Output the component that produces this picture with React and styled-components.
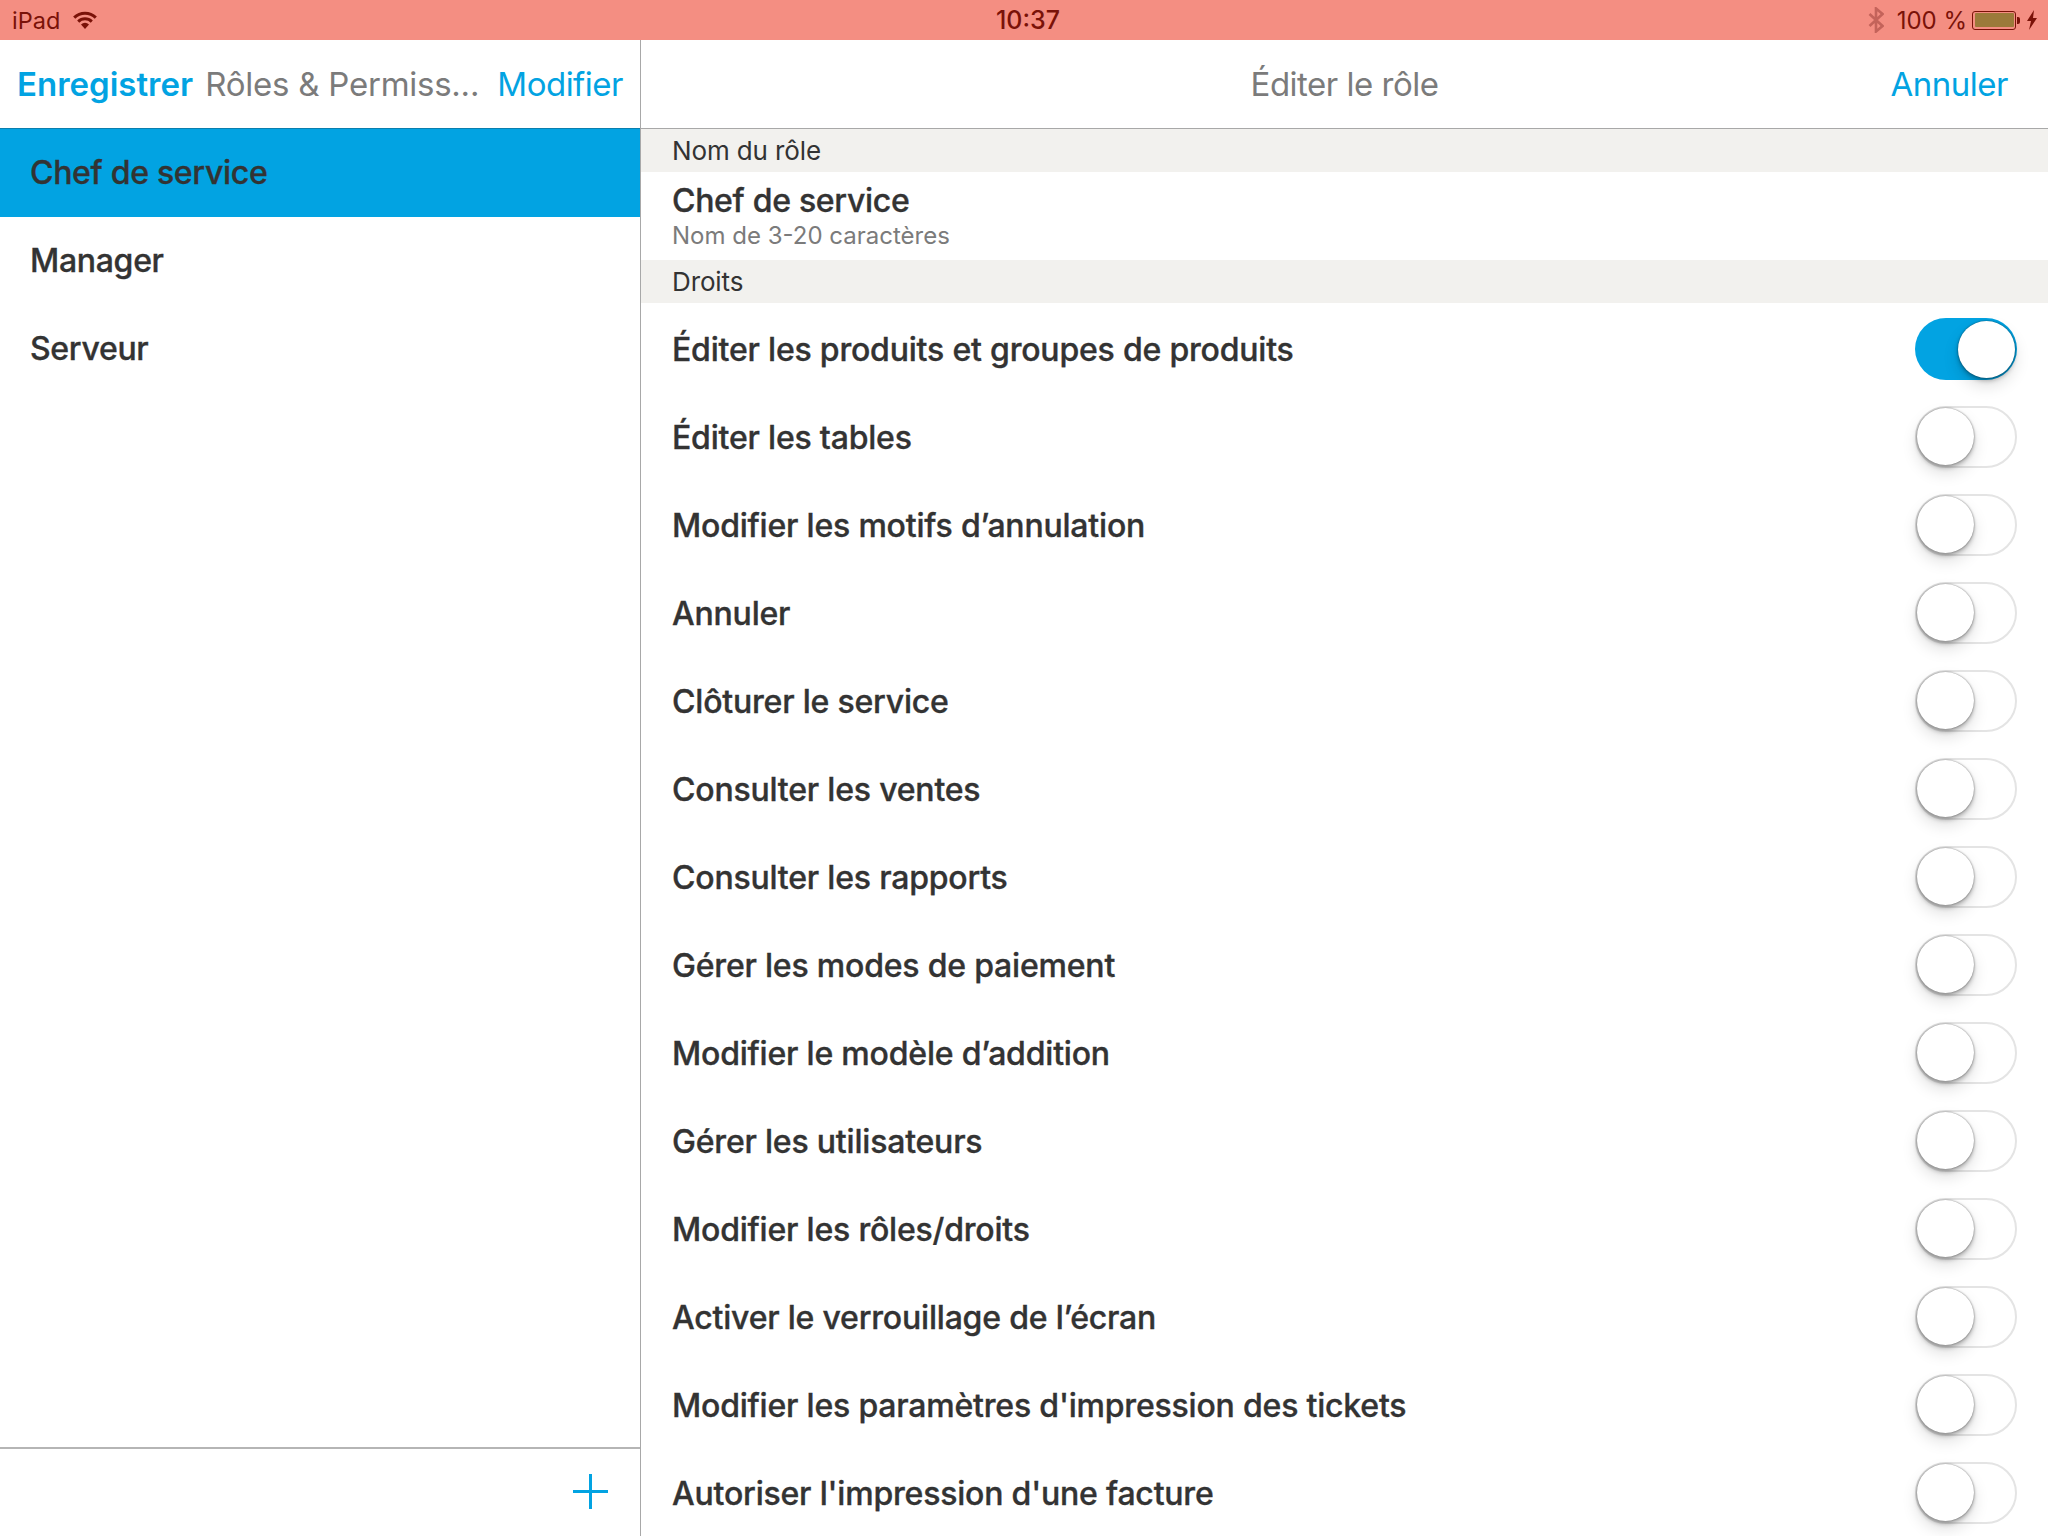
import React from 'react'
import styled, { createGlobalStyle } from 'styled-components'

const BLUE = '#02a3e2'
const INK = '#333333'
const GRAY = '#7b7b7b'
const STATUS_INK = '#7a1208'

const rights = [
  { label: 'Éditer les produits et groupes de produits', on: true },
  { label: 'Éditer les tables' },
  { label: 'Modifier les motifs d’annulation' },
  { label: 'Annuler' },
  { label: 'Clôturer le service' },
  { label: 'Consulter les ventes' },
  { label: 'Consulter les rapports' },
  { label: 'Gérer les modes de paiement' },
  { label: 'Modifier le modèle d’addition' },
  { label: 'Gérer les utilisateurs' },
  { label: 'Modifier les rôles/droits' },
  { label: 'Activer le verrouillage de l’écran' },
  { label: "Modifier les paramètres d'impression des tickets" },
  { label: "Autoriser l'impression d'une facture" },
]

const roles = ['Chef de service', 'Manager', 'Serveur']

function App() {
  return (
    <Screen>
      <GlobalStyle />
      <StatusBar>
        <StatusLeft>
          <span>iPad</span>
          <svg width="24" height="18" viewBox="0 0 24 18">
            <path d="M1.2 6.6a15.4 15.4 0 0 1 21.6 0" fill="none" stroke={STATUS_INK} strokeWidth="3" />
            <path d="M5.2 10.6a9.8 9.8 0 0 1 13.6 0" fill="none" stroke={STATUS_INK} strokeWidth="3" />
            <path d="M8 13.4a6 6 0 0 1 8 0L12 18z" fill={STATUS_INK} />
          </svg>
        </StatusLeft>
        <StatusTime>10:37</StatusTime>
        <StatusRight>
          <svg width="16" height="26" viewBox="0 0 16 26">
            <path d="M1.5 7l13 12-6.500 5.500V1.500L14.500 7l-13 12" fill="none" stroke="#c4635a" strokeWidth="2.6" />
          </svg>
          <BatteryText>100 %</BatteryText>
          <Battery><BatteryFill /></Battery>
          <BatteryTip />
          <svg width="12" height="20" viewBox="0 0 12 20">
            <path d="M8 0L1 11h4l-2 9 8-12H7z" fill={STATUS_INK} />
          </svg>
        </StatusRight>
      </StatusBar>
      <Columns>
        <Sidebar>
          <SideNav>
            <NavBold>Enregistrer</NavBold>
            <NavGrayTitle>Rôles &amp; Permiss...</NavGrayTitle>
            <NavLink>Modifier</NavLink>
          </SideNav>
          <RoleList>
            {roles.map((role, i) => (
              <RoleRow key={role} $selected={i === 0}>{role}</RoleRow>
            ))}
          </RoleList>
          <SideFooter>
            <svg width="35" height="35" viewBox="0 0 35 35">
              <path d="M17.500 0v35M0 17.500h35" stroke={BLUE} strokeWidth="3" />
            </svg>
          </SideFooter>
        </Sidebar>
        <Detail>
          <DetailNav>
            <DetailTitle>Éditer le rôle</DetailTitle>
            <CancelLink>Annuler</CancelLink>
          </DetailNav>
          <SectionHeader>Nom du rôle</SectionHeader>
          <NameBlock>
            <NameValue>Chef de service</NameValue>
            <NameHint>Nom de 3-20 caractères</NameHint>
          </NameBlock>
          <SectionHeader>Droits</SectionHeader>
          <RightsList>
            {rights.map((r) => (
              <RightRow key={r.label}>
                <span>{r.label}</span>
                <Toggle $on={r.on}><Knob $on={r.on} /></Toggle>
              </RightRow>
            ))}
          </RightsList>
        </Detail>
      </Columns>
    </Screen>
  )
}

export default App

const GlobalStyle = createGlobalStyle`
  html, body {
    margin: 0;
    padding: 0;
    background: #fff;
  }
  * {
    box-sizing: border-box;
  }
`

const Screen = styled.div`
  width: 2048px;
  height: 1536px;
  overflow: hidden;
  display: flex;
  flex-direction: column;
  font-family: Inter, "Liberation Sans", sans-serif;
  color: ${INK};
`

const StatusBar = styled.div`
  height: 40px;
  flex: none;
  background: #f48e82;
  display: grid;
  grid-template-columns: 1fr auto 1fr;
  align-items: center;
  padding: 0 10px 0 12px;
  color: ${STATUS_INK};
  font-size: 24px;
`

const StatusLeft = styled.div`
  display: flex;
  align-items: center;
  gap: 13px;
  font-size: 23.5px;
`

const StatusTime = styled.div`
  font-weight: 500;
  font-size: 25px;
  margin-left: 6px;
`

const StatusRight = styled.div`
  display: flex;
  align-items: center;
  justify-content: flex-end;
`

const BatteryText = styled.span`
  margin: 0 5px 0 13px;
`

const Battery = styled.div`
  width: 44px;
  height: 19px;
  border: 1px solid ${STATUS_INK};
  border-radius: 3px;
  padding: 1.500px;
`

const BatteryFill = styled.div`
  height: 100%;
  background: #9b7a3a;
  border-radius: 1px;
`

const BatteryTip = styled.div`
  width: 3px;
  height: 7px;
  margin: 0 6px 0 1px;
  background: ${STATUS_INK};
  border-radius: 0 2px 2px 0;
`

const Columns = styled.div`
  flex: 1;
  display: flex;
  min-height: 0;
`

const Sidebar = styled.div`
  width: 641px;
  flex: none;
  display: flex;
  flex-direction: column;
  border-right: 1px solid #a8a8a8;
`

const SideNav = styled.div`
  height: 89px;
  flex: none;
  display: flex;
  align-items: center;
  justify-content: space-between;
  padding: 0 17px;
  font-size: 33px;
  border-bottom: 1px solid #0a7fae;
`

const NavBold = styled.span`
  color: ${BLUE};
  font-weight: 600;
`

const NavGrayTitle = styled.span`
  color: ${GRAY};
  letter-spacing: -0.25px;
  margin-right: 6px;
`

const NavLink = styled.span`
  color: ${BLUE};
  letter-spacing: -0.5px;
`

const RoleList = styled.div`
  flex: 1;
`

const RoleRow = styled.div`
  height: 88px;
  display: flex;
  align-items: center;
  padding: 0 0 1px 30px;
  font-size: 32px;
  font-weight: 500;
  -webkit-text-stroke: 0.35px ${INK};
  letter-spacing: -0.3px;
  background: ${(p) => (p.$selected ? BLUE : 'transparent')};
`

const SideFooter = styled.div`
  height: 89px;
  flex: none;
  border-top: 2px solid #b5b5b5;
  display: flex;
  align-items: center;
  justify-content: flex-end;
  padding: 0 32px 3px 0;
`

const Detail = styled.div`
  flex: 1;
  min-width: 0;
  display: flex;
  flex-direction: column;
`

const DetailNav = styled.div`
  height: 89px;
  flex: none;
  display: flex;
  align-items: center;
  justify-content: center;
  position: relative;
  border-bottom: 1px solid #a8a8a8;
  font-size: 33px;
  letter-spacing: -0.5px;
`

const DetailTitle = styled.span`
  color: ${GRAY};
`

const CancelLink = styled.span`
  position: absolute;
  right: 40px;
  color: ${BLUE};
`

const SectionHeader = styled.div`
  height: 43px;
  flex: none;
  background: #f2f1ee;
  display: flex;
  align-items: center;
  padding: 0 0 1px 31px;
  font-size: 26px;
  letter-spacing: -0.12px;
`

const NameBlock = styled.div`
  height: 88px;
  flex: none;
  padding: 9px 31px 0;
`

const NameValue = styled.div`
  font-size: 32px;
  font-weight: 500;
  -webkit-text-stroke: 0.35px ${INK};
  letter-spacing: -0.3px;
  line-height: 40px;
`

const NameHint = styled.div`
  font-size: 24px;
  line-height: 30px;
  color: ${GRAY};
`

const RightsList = styled.div`
  padding-top: 2px;
`

const RightRow = styled.div`
  height: 88px;
  display: flex;
  align-items: center;
  justify-content: space-between;
  padding: 0 31px;
  font-size: 32px;
  font-weight: 500;
  -webkit-text-stroke: 0.35px ${INK};
  letter-spacing: -0.2px;
`

const Toggle = styled.div`
  width: 102px;
  height: 62px;
  border-radius: 31px;
  position: relative;
  background: ${(p) => (p.$on ? BLUE : '#fff')};
  border: ${(p) => (p.$on ? 'none' : '2.5px solid #e4e4e4')};
`

const Knob = styled.div`
  position: absolute;
  width: 57px;
  height: 57px;
  border-radius: 50%;
  background: #fff;
  top: ${(p) => (p.$on ? '3px' : '0')};
  left: ${(p) => (p.$on ? '43px' : '0')};
  box-shadow: 0 0 2px rgba(0, 0, 0, 0.5), 0 3px 4px rgba(0, 0, 0, 0.25), 0 8px 16px rgba(0, 0, 0, 0.13);
`
